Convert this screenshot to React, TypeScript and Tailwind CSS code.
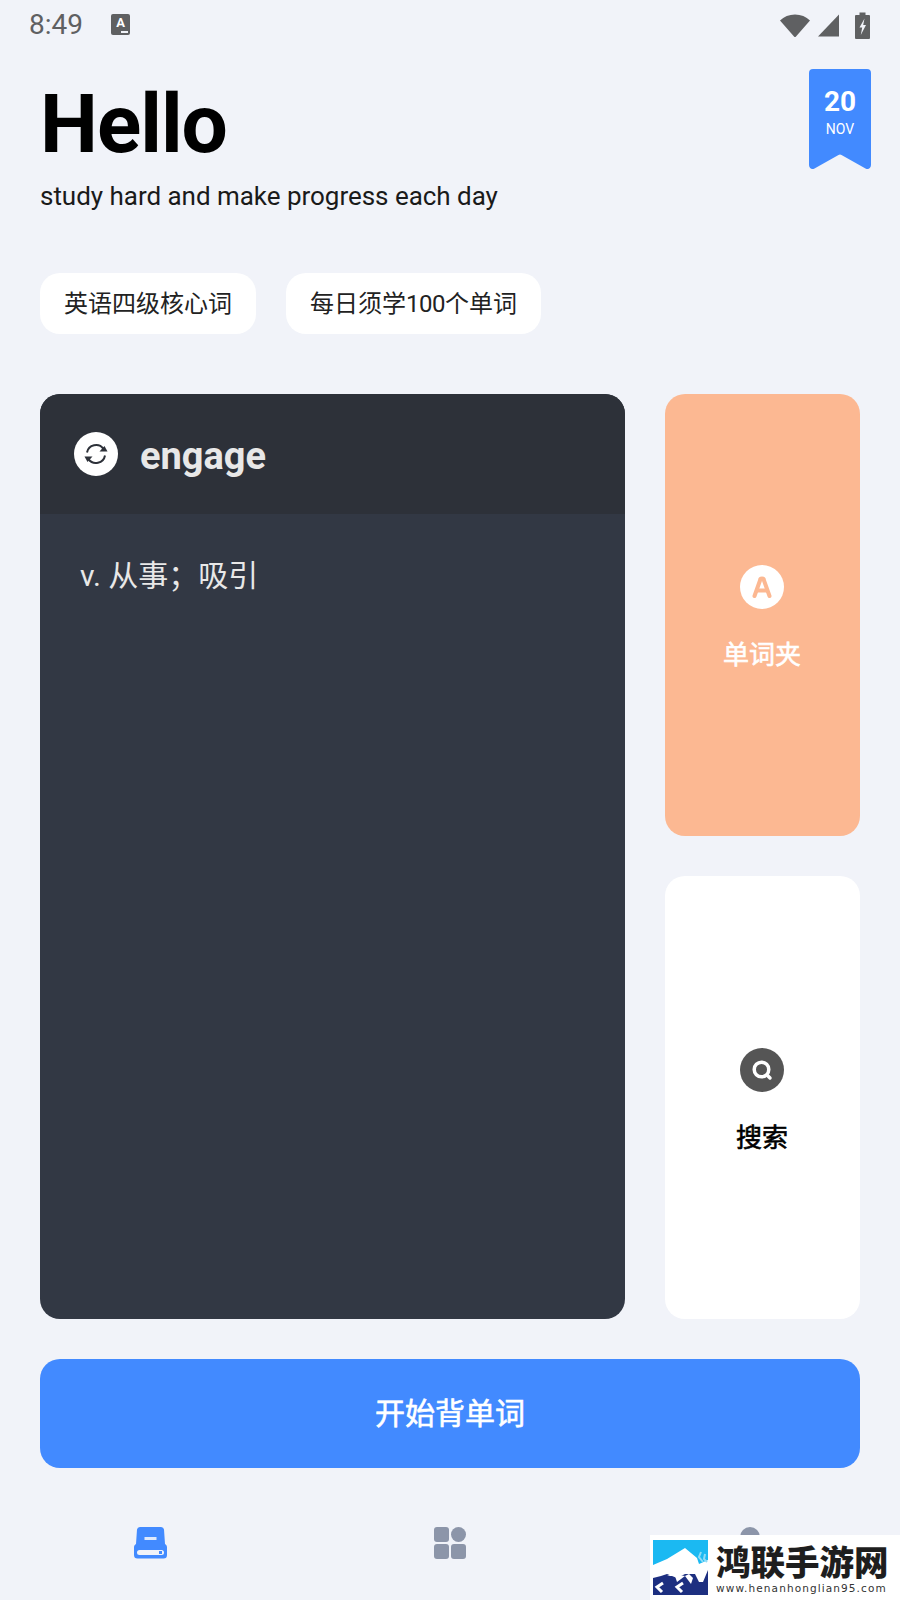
import React from "react";

const roboto = { fontFamily: "Roboto, 'Noto Sans CJK SC', sans-serif" };

function WifiIcon() {
  return (
    <svg width="32" height="25" viewBox="0 0 32 25">
      <path d="M1 7.500C5 3.500 10 1.500 16 1.500S27 3.500 31 7.500L17 23.500a1.300 1.300 0 0 1-2 0Z" fill="#5f6062" />
    </svg>
  );
}

function SignalIcon() {
  return (
    <svg width="23" height="23" viewBox="0 0 23 23">
      <path d="M22 0.500V22.500H1Z" fill="#5f6062" />
    </svg>
  );
}

function BatteryIcon() {
  return (
    <svg width="15" height="27" viewBox="0 0 15 27">
      <path d="M4.500 0.500H10.500V3H14a1 1 0 0 1 1 1V26a1 1 0 0 1-1 1H1a1 1 0 0 1-1-1V4a1 1 0 0 1 1-1H4.500Z" fill="#5f6062" />
      <path d="M9.500 6.500 4.500 15.500H7.200L5.800 23 11 13H8.200Z" fill="#f1f3f9" />
    </svg>
  );
}

function Bookmark() {
  return (
    <div className="relative w-[62px] h-[101px] shrink-0 text-white text-center">
      <svg className="absolute inset-0" width="62" height="101" viewBox="0 0 62 101">
        <path d="M4 0H58a4 4 0 0 1 4 4V96c0 3-2.500 5-5.500 3.500L32.500 86a3 3 0 0 0-3 0L5.500 99.500C2.500 101 0 99 0 96V4a4 4 0 0 1 4-4Z" fill="#428aff" />
      </svg>
      <div className="relative pt-[17px] text-[28px] leading-[32px] font-bold">20</div>
      <div className="relative mt-[2px] text-[14px] leading-[18px]">NOV</div>
    </div>
  );
}

function RefreshGlyph() {
  return (
    <svg width="26" height="26" viewBox="0 0 26 26" fill="none" stroke="#2d3139" strokeWidth="2">
      <path d="M4 11.500A9.200 9.200 0 0 1 20.500 7.800" />
      <path d="M22 14.500A9.200 9.200 0 0 1 5.500 18.200" />
      <path d="M16.500 10.500H24.500L21.500 5Z" fill="#2d3139" stroke="none" />
      <path d="M9.500 15.500H1.500L4.500 21Z" fill="#2d3139" stroke="none" />
    </svg>
  );
}

function FolderCard() {
  return (
    <div className="h-[442px] rounded-[20px] bg-[#fcb892] flex flex-col items-center justify-center pt-[8px] pr-[1px]">
      <div className="w-[44px] h-[44px] rounded-full bg-white flex items-center justify-center">
        <svg width="24" height="24" viewBox="0 0 24 24" fill="none" stroke="#fcb892" strokeWidth="4" strokeLinecap="round" strokeLinejoin="round">
          <path d="M4.500 21 10 5.500a2 2 0 0 1 4 0L19.500 21" />
          <path d="M7.500 15.500H16.500" />
        </svg>
      </div>
      <div className="mt-[28px] text-[26px] leading-[36px] font-normal [-webkit-text-stroke:0.6px_#ffffff] text-white">单词夹</div>
    </div>
  );
}

function SearchCard() {
  return (
    <div className="flex-1 rounded-[20px] bg-white flex flex-col items-center justify-center pt-[8px] pr-[1px]">
      <div className="w-[44px] h-[44px] rounded-full bg-[#555555] flex items-center justify-center">
        <svg width="26" height="26" viewBox="0 0 26 26" fill="none" stroke="#ffffff" strokeWidth="3.500" strokeLinecap="round">
          <circle cx="12.500" cy="12.500" r="7.300" />
          <path d="M18.500 18.500 21 21" />
        </svg>
      </div>
      <div className="mt-[28px] text-[26px] leading-[36px] font-normal [-webkit-text-stroke:0.6px_#000000] text-black">搜索</div>
    </div>
  );
}

function BottomNav() {
  return (
    <nav className="grid grid-cols-3 mt-[59px]">
      <div className="flex justify-center">
        <svg width="33" height="32" viewBox="0 0 33 32">
          <path d="M6 0H27a3 3 0 0 1 3 2.500L31 17c1.500 1 2 2 2 3.500V28a3.500 3.500 0 0 1-3.500 3.500H3.500A3.500 3.500 0 0 1 0 28V20.500C0 19 .5 18 2 17L3 2.500A3 3 0 0 1 6 0Z" fill="#428aff" />
          <rect x="10.500" y="10" width="12" height="3" fill="#dfe9fb" />
          <rect x="3" y="23" width="27" height="5" rx="2.500" fill="#f1f3f9" />
          <rect x="25" y="24" width="3" height="3" fill="#428aff" />
        </svg>
      </div>
      <div className="flex justify-center">
        <div className="grid grid-cols-2 gap-[2px] w-[32px] h-[32px]">
          <div className="rounded-[3px] bg-[#8c95a9]" />
          <div className="rounded-full bg-[#8c95a9]" />
          <div className="rounded-[3px] bg-[#8c95a9]" />
          <div className="rounded-[3px] bg-[#8c95a9]" />
        </div>
      </div>
      <div className="flex justify-center">
        <div className="w-[20px] h-[20px] rounded-full bg-[#8c95a9]" />
      </div>
    </nav>
  );
}

function Watermark() {
  return (
    <div className="absolute left-[650px] top-[1535px] w-[250px] h-[65px] bg-white flex items-center pl-[3px]">
      <svg width="55" height="55" viewBox="0 0 55 55" className="shrink-0">
        <rect width="55" height="55" fill="#1d2f80" />
        <rect width="55" height="28" fill="#1bb9f2" />
        <path d="M0 25 14 19 32 8 44 18 46 24 55 20V30L50 42 46 42 42 34H32L24 38 14 34 8 36 0 38Z" fill="#ffffff" />
        <path d="M48 12 46 17 50 22M52 14 51 19 54 22" fill="none" stroke="#8fdcf7" strokeWidth="2" />
        <path d="M14 36 20 34 32 36 36 34 40 38 38 44 32 36 24 42 22 36Z" fill="#ffffff" />
        <path d="M10 43 4 47 9 52M30 43 24 47 29 52" fill="none" stroke="#ffffff" strokeWidth="3" />
      </svg>
      <div className="ml-[8px] flex flex-col">
        <div className="text-[34.500px] leading-[38px] font-black text-[#1e1e1e] whitespace-nowrap" style={{ fontFamily: "'Noto Sans CJK SC', sans-serif" }}>
          鸿联手游网
        </div>
        <div className="text-[10.500px] leading-[14px] tracking-[1.100px] font-medium text-[#333333] whitespace-nowrap mt-[2px]" style={{ fontFamily: "'DejaVu Sans', sans-serif" }}>
          www.henanhonglian95.com
        </div>
      </div>
    </div>
  );
}

export default function App() {
  return (
    <div className="relative w-[900px] h-[1600px] overflow-hidden bg-[#f1f3f9] px-[40px]" style={roboto}>
      {/* status bar */}
      <div className="flex items-center h-[50px] -mr-[10px] -ml-[11px]">
        <span className="text-[28px] leading-[50px] text-[#5f6062]">8:49</span>
        <div className="ml-[28px] -mt-[2px] w-[19px] h-[21px] rounded-[2px] bg-[#5f6062] relative text-white text-[13px] leading-[18px] font-bold text-center">
          A
          <div className="absolute right-[2px] bottom-[2px] w-[7px] h-[2px] bg-[#f1f3f9]" />
        </div>
        <div className="flex items-center ml-auto">
          <WifiIcon />
          <div className="ml-[6px]"><SignalIcon /></div>
          <div className="ml-[15px]"><BatteryIcon /></div>
        </div>
      </div>

      {/* greeting */}
      <div className="flex justify-between pt-[19px]">
        <div>
          <h1 className="text-[82px] leading-[94px] font-bold text-black tracking-[-1px] mt-[8px]">Hello</h1>
          <p className="text-[26px] leading-[30px] text-[#1a1a1a] mt-[10px] tracking-[-0.030px]">study hard and make progress each day</p>
        </div>
        <div className="-mr-[11px]"><Bookmark /></div>
      </div>

      {/* chips */}
      <div className="flex gap-[30px] mt-[62px]">
        <div className="h-[61px] px-[24px] rounded-[20px] bg-white flex items-center text-[24px] text-[#222222] pt-[1px]">英语四级核心词</div>
        <div className="h-[61px] px-[24px] rounded-[20px] bg-white flex items-center text-[24px] text-[#222222] pt-[1px]">
          每日须学<span className="tracking-[-0.500px]">100</span>个单词
        </div>
      </div>

      {/* main cards */}
      <div className="flex gap-[40px] mt-[60px] h-[925px]">
        <div className="w-[585px] rounded-[20px] overflow-hidden bg-[#323844] flex flex-col">
          <div className="h-[120px] bg-[#2d3139] flex items-center pl-[34px]">
            <div className="w-[44px] h-[44px] rounded-full bg-white flex items-center justify-center">
              <RefreshGlyph />
            </div>
            <span className="ml-[22px] pt-[4px] text-[38px] font-bold text-[#e8e8e8]">engage</span>
          </div>
          <div className="pl-[40px] pt-[40px] text-[30px] leading-[44px] text-[#e8e8e8]">v. 从事；吸引</div>
        </div>
        <div className="w-[195px] flex flex-col gap-[40px]">
          <FolderCard />
          <SearchCard />
        </div>
      </div>

      {/* start button */}
      <div className="mt-[40px] h-[109px] rounded-[20px] bg-[#428aff] flex items-center justify-center text-[30px] font-normal [-webkit-text-stroke:0.6px_#ffffff] text-white">
        开始背单词
      </div>

      <div className="-mx-[40px]">
        <BottomNav />
      </div>

      <Watermark />
    </div>
  );
}
